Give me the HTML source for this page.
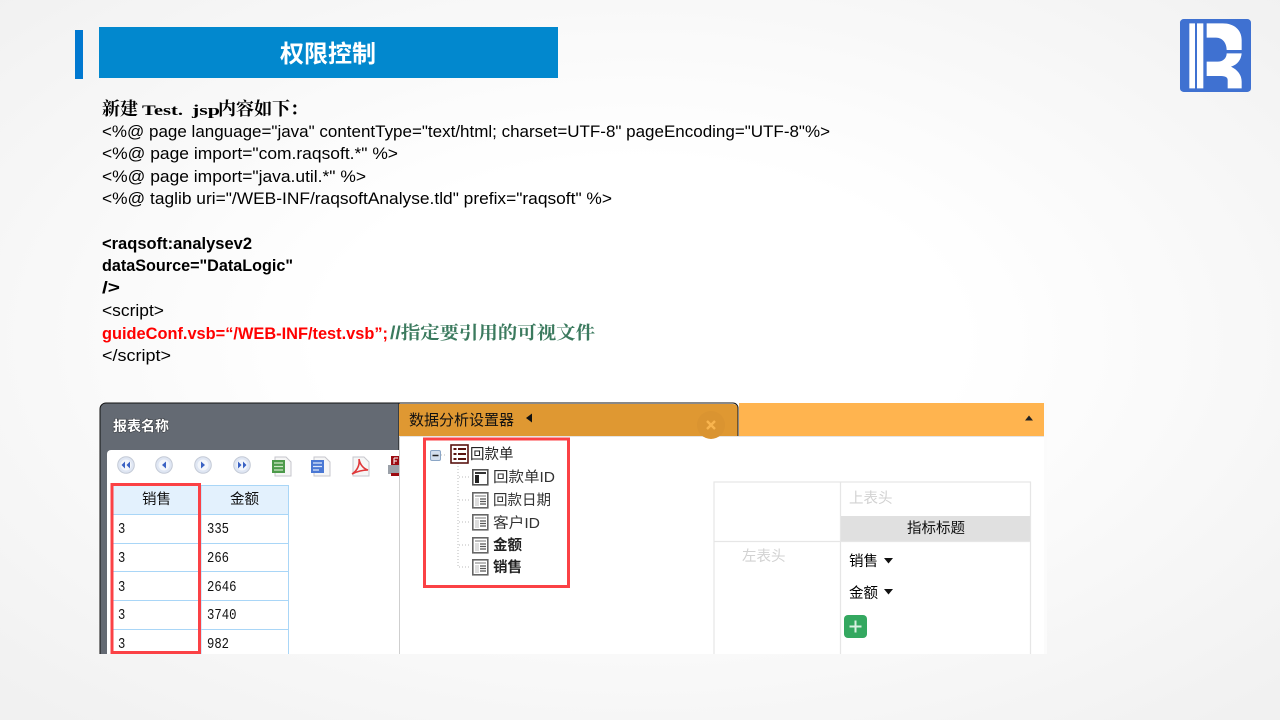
<!DOCTYPE html>
<html lang="zh">
<head>
<meta charset="utf-8">
<title>权限控制</title>
<style>
html,body{margin:0;padding:0;width:1280px;height:720px;overflow:hidden;background:#f2f2f2}
svg{display:block;position:absolute;left:0;top:0}
.c{font-family:"Liberation Sans","Noto Sans CJK SC",sans-serif;font-size:17px;fill:#000}
.b{font-weight:bold}
.h{font-family:"Liberation Mono","Noto Serif CJK SC",serif;font-size:18px;font-weight:bold;fill:#000}
.s{font-family:"Liberation Sans","WenQuanYi Zen Hei","Noto Sans CJK SC",sans-serif;font-size:14.5px;fill:#111}
.n{font-family:"Liberation Mono",monospace;font-size:14.5px;fill:#111}
.g{font-family:"Liberation Sans","WenQuanYi Zen Hei","Noto Sans CJK SC",sans-serif;font-size:14.5px;fill:#d2d2d2}
</style>
</head>
<body>
<svg width="1280" height="720" viewBox="0 0 1280 720" xmlns="http://www.w3.org/2000/svg">
<defs>
<radialGradient id="bg" gradientUnits="userSpaceOnUse" cx="0" cy="0" r="1" gradientTransform="translate(640 340) scale(890 500)">
<stop offset="0" stop-color="#ffffff"/><stop offset=".36" stop-color="#ffffff"/><stop offset="1" stop-color="#f1f1f1"/>
</radialGradient>
<clipPath id="pic"><rect x="99" y="402" width="950" height="252"/></clipPath>
<clipPath id="left"><rect x="99" y="402" width="300" height="252"/></clipPath>
<g id="ico"><rect x="0.8" y="0.8" width="15" height="15" fill="#fff" stroke="#666" stroke-width="1.6"/><rect x="3" y="3" width="11" height="2" fill="#bbb"/><rect x="3" y="6" width="4" height="8" fill="#ddd"/><path d="M8 7h6M8 9.5h6M8 12h6" stroke="#555" stroke-width="1.2"/></g>
<g id="nav"><circle r="8.3" fill="#dfe6f3" stroke="#c4cad6"/><circle r="5.5" fill="#f3f6fb"/></g>
</defs>
<rect width="1280" height="720" fill="url(#bg)"/>

<rect x="75" y="30" width="8" height="49" fill="#0078d0"/>
<rect x="99" y="27" width="459" height="51" fill="#0288ce"/>
<text x="328" y="62" text-anchor="middle" font-family="'Noto Sans CJK SC',sans-serif" font-size="24" font-weight="bold" fill="#fff">权限控制</text>

<g transform="translate(1176 15) scale(.33333)">
<rect x="12" y="12" width="213" height="219" rx="11" fill="#3f71d1"/>
<path fill="#fff" d="M40 25h17v195H40zM63 25h19v195H63z"/>
<path fill="#fff" d="M92 25H140C175 25 197 45 197 75V105H152C152 85 140 68 120 68H92Z"/>
<path fill="#fff" d="M152 115H197C195 135 185 148 165 155C185 165 197 180 197 200V220H155V195C155 185 145 183 130 183H92V140H125C140 140 152 130 152 115Z"/>
</g>

<text class="h" x="102" y="115">新建</text>
<text class="h" x="142" y="115" style="font-size:15px;font-family:'Liberation Serif',serif" textLength="41" lengthAdjust="spacingAndGlyphs">Test.</text>
<text class="h" x="192" y="115" style="font-size:15px;font-family:'Liberation Serif',serif" textLength="28" lengthAdjust="spacingAndGlyphs">jsp</text>
<text class="h" x="218" y="115">内容如下</text>
<text class="h" x="290" y="115">：</text>
<text class="c" x="102" y="137" textLength="728" lengthAdjust="spacingAndGlyphs">&lt;%@ page language="java" contentType="text/html; charset=UTF-8" pageEncoding="UTF-8"%&gt;</text>
<text class="c" x="102" y="159" textLength="296" lengthAdjust="spacingAndGlyphs">&lt;%@ page import="com.raqsoft.*" %&gt;</text>
<text class="c" x="102" y="182" textLength="264" lengthAdjust="spacingAndGlyphs">&lt;%@ page import="java.util.*" %&gt;</text>
<text class="c" x="102" y="204" textLength="510" lengthAdjust="spacingAndGlyphs">&lt;%@ taglib uri="/WEB-INF/raqsoftAnalyse.tld" prefix="raqsoft" %&gt;</text>
<text class="c b" x="102" y="249" textLength="150" lengthAdjust="spacingAndGlyphs">&lt;raqsoft:analysev2</text>
<text class="c b" x="102" y="271" textLength="191" lengthAdjust="spacingAndGlyphs">dataSource="DataLogic"</text>
<text class="c b" x="102" y="293" textLength="18" lengthAdjust="spacingAndGlyphs">/&gt;</text>
<text class="c" x="102" y="316" textLength="62" lengthAdjust="spacingAndGlyphs">&lt;script&gt;</text>
<text class="c b" x="102" y="339" style="fill:#ff0000" textLength="286" lengthAdjust="spacingAndGlyphs">guideConf.vsb=“/WEB-INF/test.vsb”;</text>
<text x="390" y="339" font-family="'Liberation Sans','Noto Serif CJK SC',serif" font-size="18" font-weight="bold" fill="#3b7a5e" textLength="205" lengthAdjust="spacingAndGlyphs">//指定要引用的可视文件</text>
<text class="c" x="102" y="361" textLength="69" lengthAdjust="spacingAndGlyphs">&lt;/script&gt;</text>

<g clip-path="url(#pic)">
<!-- left report panel -->
<path d="M100 660V409a6 6 0 0 1 6-6h293v257z" fill="#646a73" stroke="#111" stroke-width="1"/>
<text x="113" y="431" font-family="'Noto Sans CJK SC',sans-serif" font-size="14" font-weight="bold" fill="#fff" style="paint-order:stroke" stroke="#3d4046" stroke-width="1.2">报表名称</text>
<path d="M107 660V454a4 4 0 0 1 4-4h288v210z" fill="#fff"/>
<g clip-path="url(#left)">
<g transform="translate(126 465)"><use href="#nav"/><path d="M-1-3.5-4.5 0-1 3.5zM4-3.5.5 0 4 3.5z" fill="#3a62c4"/></g>
<g transform="translate(164 465)"><use href="#nav"/><path d="M2-3.5-2 0 2 3.5z" fill="#3a62c4"/></g>
<g transform="translate(203 465)"><use href="#nav"/><path d="M-2-3.5 2 0-2 3.5z" fill="#3a62c4"/></g>
<g transform="translate(242 465)"><use href="#nav"/><path d="M1-3.5 4.5 0 1 3.5zM-4-3.5-.5 0-4 3.5z" fill="#3a62c4"/></g>
<path d="M275 457h11l5 5v14h-16z" fill="#f6f6f6" stroke="#c6c6cc"/><rect x="272" y="460" width="13" height="13" fill="#4c9a4a"/><path d="M274 463h9M274 466.5h9M274 470h9" stroke="#cfe8c8" stroke-width="1.2"/>
<path d="M314 457h11l5 5v14h-16z" fill="#f6f6f6" stroke="#c6c6cc"/><rect x="311" y="460" width="13" height="13" fill="#4a78d4"/><path d="M313 463h9M313 466.5h9M313 470h6" stroke="#dce7fa" stroke-width="1.2"/>
<path d="M353 457h11l5 5v14h-16z" fill="#f6f6f6" stroke="#c6c6cc"/><path d="M352 474c5-3 8-9 7-15 1 6 5 10 9 11-5 0-10 1-16 4z" fill="none" stroke="#e0383a" stroke-width="1.6"/>
<rect x="391" y="456" width="9" height="10" fill="#9c0a10"/><path d="M394 458h4M394 458v6M394 461h3" stroke="#fff" fill="none"/><rect x="388" y="465" width="12" height="9" fill="#9aa0a8"/><rect x="391" y="473" width="9" height="3" fill="#9c0a10"/>
</g>

<!-- table -->
<rect x="113" y="486" width="175.500" height="28" fill="#e3f1fd"/>
<g fill="none" stroke="#a9d6f7" stroke-width="1">
<path d="M112.500 485.500H288.500V660M112.500 485.500V660M201 485.500V660M112.500 514.500H288.500M112.500 543.500H288.500M112.500 571.500H288.500M112.500 600.500H288.500M112.500 629.500H288.500"/>
</g>
<text class="s" x="142" y="504">销售</text><text class="s" x="230" y="504">金额</text>
<text class="n" x="118" y="533" textLength="7.300" lengthAdjust="spacingAndGlyphs">3</text><text class="n" x="207" y="533" textLength="22" lengthAdjust="spacingAndGlyphs">335</text>
<text class="n" x="118" y="562" textLength="7.300" lengthAdjust="spacingAndGlyphs">3</text><text class="n" x="207" y="562" textLength="22" lengthAdjust="spacingAndGlyphs">266</text>
<text class="n" x="118" y="591" textLength="7.300" lengthAdjust="spacingAndGlyphs">3</text><text class="n" x="207" y="591" textLength="29.500" lengthAdjust="spacingAndGlyphs">2646</text>
<text class="n" x="118" y="619" textLength="7.300" lengthAdjust="spacingAndGlyphs">3</text><text class="n" x="207" y="619" textLength="29.500" lengthAdjust="spacingAndGlyphs">3740</text>
<text class="n" x="118" y="648" textLength="7.300" lengthAdjust="spacingAndGlyphs">3</text><text class="n" x="207" y="648" textLength="22" lengthAdjust="spacingAndGlyphs">982</text>
<rect x="112" y="484.500" width="87.500" height="168" fill="none" stroke="#fb4145" stroke-width="3"/>

<!-- right panel -->
<rect x="399" y="436" width="645" height="224" fill="#fff"/>
<rect x="1044" y="403" width="3" height="257" fill="#fbfbfb"/>
<path d="M399.500 436V660" stroke="#cfcfcf"/>
<path d="M399 436.500H1044" stroke="#e4e4e4"/>
<rect x="739" y="403" width="305" height="33" fill="#ffb44f"/>
<path d="M399 404h334a5 5 0 0 1 5 5v27H399z" fill="#df9832"/>
<path d="M106 403H733a5 5 0 0 1 5 5v28" fill="none" stroke="#111" stroke-width="1"/>
<text class="s" x="409" y="425" style="font-size:15px;fill:#111">数据分析设置器</text>
<path d="M532 413.500v9l-6-4.500z" fill="#111"/>
<circle cx="711" cy="425" r="14" fill="#da9431"/>
<path d="M707 421l8 8M715 421l-8 8" stroke="#f8b44e" stroke-width="2.400"/>
<path d="M1025 420.500l4-5 4 5z" fill="#222"/>

<!-- tree -->
<path d="M441 455h6M458 463V567M459 477h12M459 500h12M459 522h12M459 545h12M459 567h12" stroke="#bbb" stroke-dasharray="1 2" fill="none"/>
<rect x="430.500" y="450.500" width="10" height="10" rx="1.500" fill="#d3dfee" stroke="#8ba6c6"/><path d="M432.500 455.500h6" stroke="#222" stroke-width="1.500"/>
<rect x="451" y="445" width="17" height="18" fill="#fff" stroke="#5a1410" stroke-width="1.600"/>
<path d="M453.500 449h3M453.500 454h3M453.500 459h3M458 449h8M458 454h8M458 459h8" stroke="#5a1410" stroke-width="2"/>
<text class="s" x="470" y="459" style="fill:#222">回款单</text>
<g transform="translate(472 469)"><rect x="0.800" y="0.800" width="15" height="15" fill="#fff" stroke="#555" stroke-width="1.600"/><rect x="3" y="6" width="4" height="8" fill="#222"/><path d="M3 4h11" stroke="#333" stroke-width="2"/></g>
<use href="#ico" x="472" y="492"/><use href="#ico" x="472" y="514"/><use href="#ico" x="472" y="537"/><use href="#ico" x="472" y="559"/>
<text class="s" x="493" y="482" style="fill:#333" textLength="62" lengthAdjust="spacingAndGlyphs">回款单ID</text>
<text class="s" x="493" y="505" style="fill:#333">回款日期</text>
<text class="s" x="493" y="528" style="fill:#333" textLength="47" lengthAdjust="spacingAndGlyphs">客户ID</text>
<text class="s" x="493" y="550" style="fill:#222;font-weight:bold">金额</text>
<text class="s" x="493" y="572" style="fill:#222;font-weight:bold">销售</text>
<rect x="424.500" y="439" width="144" height="147.500" fill="none" stroke="#fb4145" stroke-width="3"/>

<!-- grid -->
<rect x="841" y="516" width="189" height="25" fill="#e0e0e0"/>
<g fill="none" stroke="#e6e6e6" stroke-width="1.200">
<path d="M714 660V482H1030.500V660M840.500 482V660M714 541.500H1030.500"/>
</g>
<text class="g" x="849" y="503">上表头</text>
<text class="g" x="742" y="561">左表头</text>
<text class="s" x="907" y="533" style="fill:#111">指标标题</text>
<text class="s" x="849" y="566" style="fill:#000">销售</text><path d="M884 558h9l-4.500 5.500z" fill="#111"/>
<text class="s" x="849" y="598" style="fill:#000">金额</text><path d="M884 589h9l-4.500 5.500z" fill="#111"/>
<rect x="844" y="615" width="23" height="23" rx="4" fill="#34a860"/>
<path d="M855.500 620.500v12M849.500 626.500h12" stroke="#d9f0e1" stroke-width="2"/>
</g>
</svg>
</body>
</html>
